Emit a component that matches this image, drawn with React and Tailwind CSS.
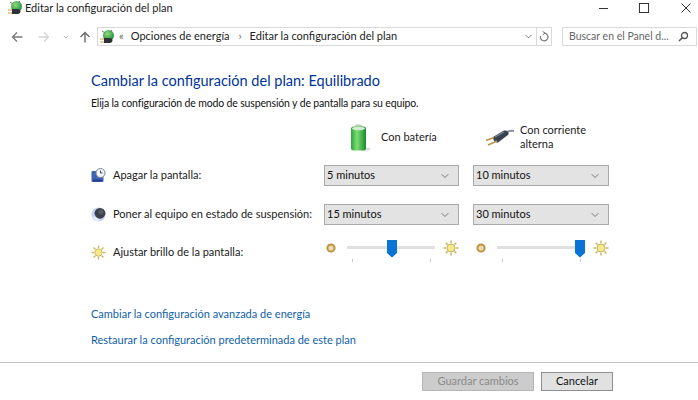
import React from "react";
import { ChevronDown } from "lucide-react";

const font = "font-['Lato','Open_Sans',sans-serif]";

function PlanIcon({ id }) {
  return (
    <svg width="16" height="16" viewBox="0 0 16 16">
      <defs>
        <radialGradient id={id} cx="0.4" cy="0.35" r="0.7">
          <stop offset="0" stopColor="#8fdc7c" />
          <stop offset="1" stopColor="#1d8a3a" />
        </radialGradient>
      </defs>
      <circle cx="9.5" cy="6.5" r="5.5" fill={`url(#${id})`} />
      <path d="M3 2 L6 4 M13 1 L11 3" stroke="#7a7a7a" strokeWidth="1" />
      <path d="M5 9 h6 a2.5 2.5 0 0 1 0 5 h-6 z" fill="#2e3236" />
      <path d="M1 10 h4 M1 13 h4" stroke="#c9a24a" strokeWidth="1.2" />
    </svg>
  );
}

function BackArrow({ color, flip }) {
  return (
    <svg width="12" height="12" viewBox="0 0 12 12" className={flip ? "-scale-x-100" : ""}>
      <path d="M11.5 6 H1.5 M6 1.5 L1.5 6 L6 10.5" fill="none" stroke={color} strokeWidth="1.4" />
    </svg>
  );
}

function ClockIcon() {
  return (
    <svg width="15" height="15" viewBox="0 0 15 15">
      <rect x="0.5" y="3" width="12" height="11" rx="1" fill="#3f62b5" />
      <rect x="2" y="11.5" width="9" height="2" fill="#24408c" />
      <circle cx="9.5" cy="5" r="4.5" fill="#f2f4f6" stroke="#7d8794" />
      <path d="M9.5 2.5 V5 H11.5" fill="none" stroke="#333" strokeWidth="0.9" />
    </svg>
  );
}

function MoonIcon() {
  return (
    <svg width="15" height="15" viewBox="0 0 15 15">
      <circle cx="7.5" cy="7.5" r="7" fill="#c3cff2" />
      <path d="M1.5 9 A7 7 0 0 0 9 14.3 L6 11 Z" fill="#eef1fb" />
      <circle cx="9" cy="6.3" r="5.4" fill="#3b3f48" />
      <circle cx="10" cy="5" r="2.5" fill="#565b66" />
    </svg>
  );
}

function SunIcon({ size = 15 }) {
  const rays = [0, 45, 90, 135, 180, 225, 270, 315];
  return (
    <svg width={size} height={size} viewBox="0 0 16 16">
      {rays.map((r) => (
        <path key={r} d="M8 0.5 V3.2" stroke="#c9b765" strokeWidth="1.5" transform={`rotate(${r} 8 8)`} />
      ))}
      <circle cx="8" cy="8" r="4" fill="#f5e98c" stroke="#bfae55" strokeWidth="0.9" />
    </svg>
  );
}

function DimIcon() {
  return (
    <svg width="10" height="10" viewBox="0 0 10 10">
      <circle cx="5" cy="5" r="3.6" fill="#e9dcae" stroke="#bd9340" strokeWidth="2" />
    </svg>
  );
}

function Battery() {
  return (
    <svg width="22" height="28" viewBox="0 0 22 28">
      <defs>
        <linearGradient id="bat" x1="0" x2="1" y1="0" y2="0">
          <stop offset="0" stopColor="#2aa63e" />
          <stop offset="0.4" stopColor="#7fdc72" />
          <stop offset="1" stopColor="#178a2e" />
        </linearGradient>
      </defs>
      <ellipse cx="17" cy="25" rx="4.5" ry="1.6" fill="#dcdcdc" />
      <rect x="6" y="0.5" width="7" height="3" rx="1.5" fill="#b9cdb9" />
      <rect x="2" y="2.5" width="15" height="24" rx="2.5" fill="url(#bat)" />
      <ellipse cx="9.5" cy="4.5" rx="6.5" ry="1.8" fill="#d3ecd0" />
    </svg>
  );
}

function Plug() {
  return (
    <svg width="30" height="20" viewBox="0 0 30 20">
      <path d="M20 5 C23 3 26 2.5 29 3" fill="none" stroke="#8c8f94" strokeWidth="2" />
      <path d="M8 9 L19 2.5 C22 2 24 4 23.5 6.5 L13 14.5 C10 15 8 12 8 9 Z" fill="#3a4150" />
      <path d="M10 9 L19 4" fill="none" stroke="#7f8899" strokeWidth="1.2" />
      <path d="M1 12.5 L9 9.5 M3 17 L12 13" stroke="#b8954a" strokeWidth="1.8" />
    </svg>
  );
}

function Select({ value }) {
  return (
    <div className="flex h-[21px] items-center justify-between border border-[#a9a9a9] bg-[#e3e3e3] pl-[2px] pr-[7px] text-[11px] text-[#111]">
      <span>{value}</span>
      <ChevronDown size={12} strokeWidth={1.2} className="text-[#333]" />
    </div>
  );
}

function Slider({ thumb, className }) {
  return (
    <div className={`flex items-start ${className}`}>
      <div className="mt-[3px] mr-[11px] flex"><DimIcon /></div>
      <div className="relative h-[24px] w-[89px]">
        <div className="mt-[6px] h-[3px] bg-[#e0e0e0]" />
        <svg width="10" height="18" viewBox="0 0 10 18" className="absolute top-0" style={{ left: thumb }}>
          <path d="M0 0 H10 V13 L5 17.5 L0 13 Z" fill="#0a74d6" />
        </svg>
        <div className="absolute top-[19px] left-[5px] h-[3px] w-px bg-[#c8c8c8]" />
        <div className="absolute top-[19px] left-[83px] h-[3px] w-px bg-[#c8c8c8]" />
      </div>
      <div className="ml-[8px] flex"><SunIcon size={16} /></div>
    </div>
  );
}

function RowLabel({ icon, text }) {
  return (
    <div className="flex items-center gap-[7px] text-[11px] whitespace-nowrap text-[#1a1a1a]">
      <span className="flex w-[15px] justify-center">{icon}</span>
      <span>{text}</span>
    </div>
  );
}

export default function App() {
  return (
    <div className={`flex h-[400px] w-[698px] flex-col overflow-hidden bg-white ${font}`}>
      {/* Title bar */}
      <div className="flex h-[15px] items-start justify-between pl-[7px] pr-[7px]">
        <div className="flex items-center gap-[2px] text-[11px] leading-[14px] text-[#222]">
          <PlanIcon id="plan-a" />
          <span>Editar la configuración del plan</span>
        </div>
        <div className="mt-[3px] flex items-center">
          <div className="h-px w-[9px] bg-[#333]" />
          <div className="ml-[31px] h-[10px] w-[10px] border border-[#333]" />
          <svg width="10" height="10" viewBox="0 0 10 10" className="ml-[32px]">
            <path d="M0.5 0.5 L9.5 9.5 M9.5 0.5 L0.5 9.5" stroke="#333" strokeWidth="1" />
          </svg>
        </div>
      </div>

      {/* Nav */}
      <div className="mt-[12px] flex h-[19px] items-center">
        <div className="ml-[11px]"><BackArrow color="#7b7b7b" /></div>
        <div className="ml-[15px]"><BackArrow color="#d5d5d5" flip /></div>
        <ChevronDown size={8} strokeWidth={1.6} className="ml-[12px] text-[#888]" />
        <svg width="12" height="12" viewBox="0 0 12 12" className="ml-[9px]">
          <path d="M6 11.5 V1.5 M1.5 6 L6 1.5 L10.5 6" fill="none" stroke="#6b6b6b" strokeWidth="1.4" />
        </svg>
        <div className="ml-[6px] flex h-[19px] w-[455px] items-center border border-[#d9d9d9] text-[11px] whitespace-nowrap text-[#222]">
          <div className="ml-[1px]"><PlanIcon id="plan-b" /></div>
          <span className="ml-[4px] text-[#666]">«</span>
          <span className="ml-[7px]">Opciones de energía</span>
          <span className="ml-[9px] text-[#666]">›</span>
          <span className="ml-[8px]">Editar la configuración del plan</span>
          <div className="ml-auto flex h-full items-center">
            <ChevronDown size={11} strokeWidth={1.6} className="mr-[2px] text-[#555]" />
            <div className="flex h-full w-[15px] items-center justify-center border-l border-[#d9d9d9]">
              <svg width="10" height="11" viewBox="0 0 10 11">
                <path d="M5 2.2 A3.8 3.8 0 1 1 1.5 5" fill="none" stroke="#777" strokeWidth="1.2" />
                <path d="M3.5 0.3 L6 2.2 L3.5 4" fill="none" stroke="#777" strokeWidth="1" />
              </svg>
            </div>
          </div>
        </div>
        <div className="ml-[10px] flex h-[19px] w-[135px] items-center justify-between border border-[#d9d9d9] pl-[6px] pr-[7px] text-[10.5px] whitespace-nowrap text-[#666]">
          <span>Buscar en el Panel d...</span>
          <svg width="11" height="11" viewBox="0 0 11 11">
            <circle cx="6.5" cy="4.5" r="3" fill="none" stroke="#555" strokeWidth="1.3" />
            <path d="M4.3 6.7 L1 10" stroke="#555" strokeWidth="1.6" />
          </svg>
        </div>
      </div>

      {/* Content */}
      <div className="flex flex-1 flex-col pl-[91px]">
        <h1 className="mt-[25px] text-[14.5px] leading-[20px] font-normal text-[#003399]">
          Cambiar la configuración del plan: Equilibrado
        </h1>
        <p className="mt-[4px] text-[10.5px] leading-[16px] tracking-[-0.15px] text-[#111]">
          Elija la configuración de modo de suspensión y de pantalla para su equipo.
        </p>

        <div className="mt-[6px] grid grid-cols-[219px_135px_136px] items-center gap-x-[14px]">
          <div className="h-[41px]" />
          <div className="flex h-[41px] items-center text-[11px] text-[#222]">
            <div className="ml-[25px]"><Battery /></div>
            <span className="mt-[-1px] ml-[10px]">Con batería</span>
          </div>
          <div className="flex h-[41px] items-center text-[11px] leading-[14px] text-[#222]">
            <div className="ml-[12px]"><Plug /></div>
            <span className="mt-[-2px] ml-[5px] w-[80px]">Con corriente alterna</span>
          </div>

          <div className="col-span-3 h-[7px]" />

          <RowLabel icon={<ClockIcon />} text="Apagar la pantalla:" />
          <Select value="5 minutos" />
          <Select value="10 minutos" />

          <div className="col-span-3 h-[18px]" />

          <RowLabel icon={<MoonIcon />} text="Poner al equipo en estado de suspensión:" />
          <Select value="15 minutos" />
          <Select value="30 minutos" />

          <div className="col-span-3 h-[15px]" />

          <RowLabel icon={<SunIcon />} text="Ajustar brillo de la pantalla:" />
          <Slider thumb={40} className="pl-[2px]" />
          <Slider thumb={78} className="pl-[3px]" />
        </div>

        <div className="mt-[42px] text-[11px] leading-[16px] text-[#0f5fa8]">Cambiar la configuración avanzada de energía</div>
        <div className="mt-[10px] text-[11px] leading-[16px] text-[#0f5fa8]">Restaurar la configuración predeterminada de este plan</div>
      </div>

      {/* Footer */}
      <div className="flex h-[38px] justify-end gap-[7px] border-t border-[#c4c4c4] pt-[9px] pr-[85px] text-[11px]">
        <div className="flex h-[19px] w-[112px] items-center justify-center border border-[#b5b5b5] bg-[#cccccc] text-[#8a8a8a]">Guardar cambios</div>
        <div className="flex h-[19px] w-[72px] items-center justify-center border border-[#8e8e8e] bg-[#e1e1e1] text-[#111]">Cancelar</div>
      </div>
    </div>
  );
}
